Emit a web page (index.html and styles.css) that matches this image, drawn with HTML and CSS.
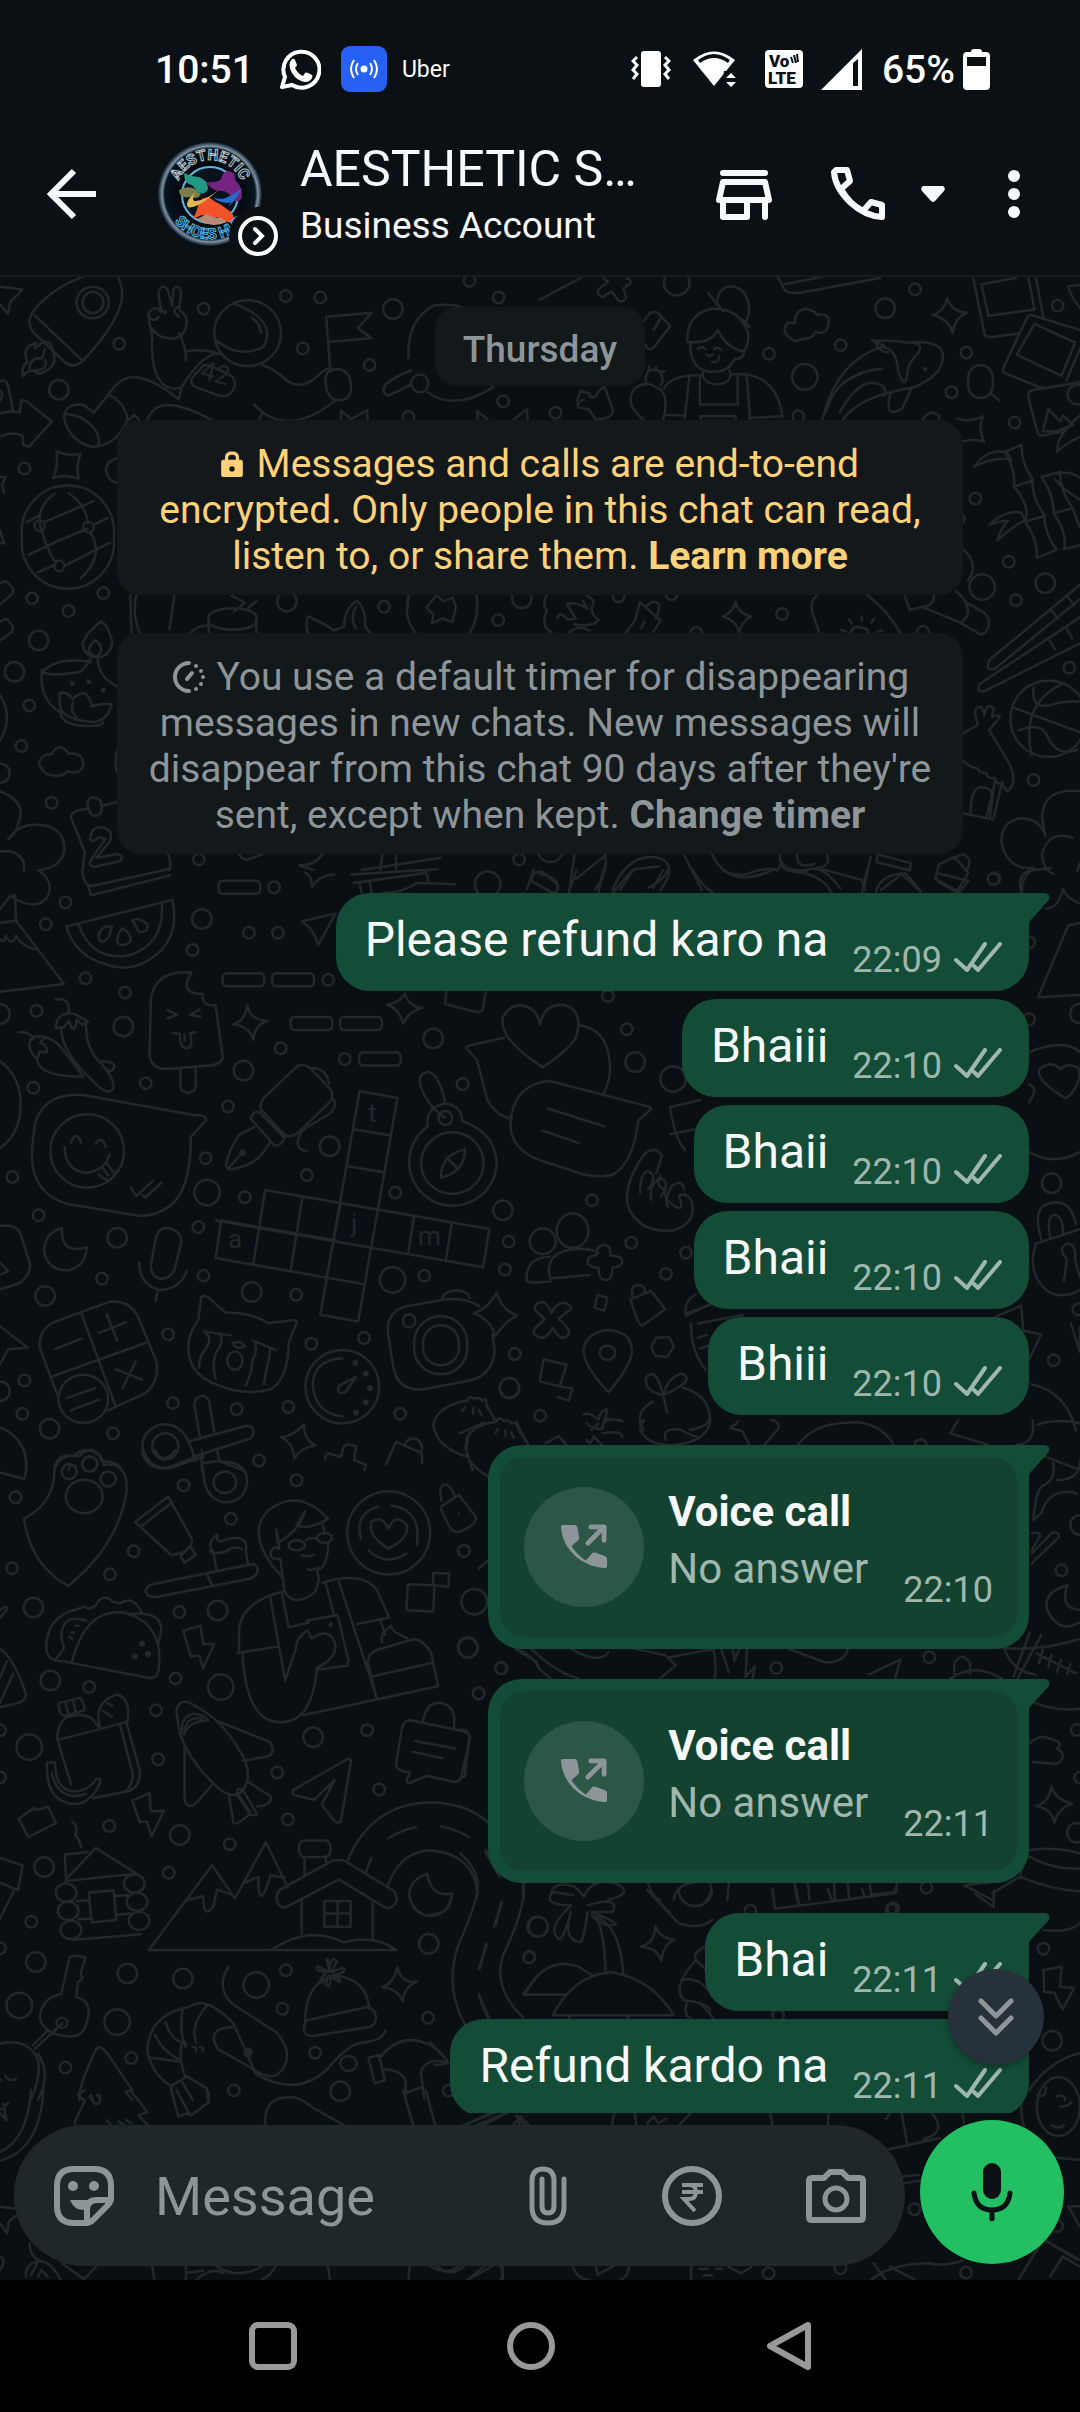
FILE: index.html
```html
<!DOCTYPE html>
<html lang="en">
<head>
  <meta charset="UTF-8">
  <meta name="viewport" content="width=device-width, initial-scale=1">
  <title>AESTHETIC S… - Chat</title>
  <link rel="stylesheet" href="styles.css">
</head>
<body>

  <!-- shared icons -->
  <svg class="sprite" aria-hidden="true">
    <symbol id="ticks" viewBox="0 0 48 30"><path d="M2 18l11 10L31 2M20 24l4 4L46 2" fill="none" stroke="currentColor" stroke-width="4" stroke-linecap="round" stroke-linejoin="round"/></symbol>
    <symbol id="tail" viewBox="0 0 22 30"><path d="M0 0h16c5 0 7 4 4 8L0 30z" fill="currentColor"/></symbol>
    <symbol id="call-out" viewBox="0 0 48 48"><path d="M2 1h12q2 0 3 2l2 11q0 2-1 3l-7 6q6 10 15 15l6-7q2-2 4-1l9 3q3 1 3 3v8q0 2-3 2C20 44 2 26 0 4 0 2 0 1 2 1z" fill="currentColor"/><path d="M28 20L43 5M31 3h14v14" fill="none" stroke="currentColor" stroke-width="5" stroke-linecap="round" stroke-linejoin="round"/></symbol>
  </svg>

  <header class="top">
    <div class="status">
      <span class="clock">10:51</span>
      <svg class="wa" viewBox="0 0 42 42"><path d="M3 39l3-10A18 18 0 1 1 13 37z" fill="none" stroke="#fff" stroke-width="4" stroke-linejoin="round"/><path d="M13 11q2-1 3 1l2 5q0 1-2 3 3 6 8 8l2-3q1-1 3 0l4 2q1 1 0 3-2 4-7 4-8-1-13-9-5-9 0-14z" fill="#fff"/></svg>
      <svg class="cast" viewBox="0 0 46 46"><rect width="46" height="46" rx="9" fill="#2660f5"/><circle cx="23" cy="23" r="3.5" fill="#fff"/><path d="M17 17q-4 6 0 12M29 17q4 6 0 12M13 14q-6 9 0 18M33 14q6 9 0 18" fill="none" stroke="#fff" stroke-width="2"/></svg>
      <span class="uber">Uber</span>
      <svg class="vibrate" viewBox="0 0 40 38"><rect x="10" y="1" width="20" height="36" rx="3" fill="#fff"/><path d="M6 7l-4 4 4 4-4 5 4 4-4 5M34 7l4 4-4 4 4 5-4 4 4 5" fill="none" stroke="#fff" stroke-width="3"/></svg>
      <svg class="wifi" viewBox="0 0 46 38"><path d="M2 10Q23-7 44 10L23 36z" fill="#fff"/><path d="M7 10Q23-2 39 10l-2 3Q23 3 9 13z" fill="#0b1014"/><path d="M33 21h12v16H31z" fill="#0b1014"/><path d="M35 28l5-5 5 5zM35 32h10l-5 5z" fill="#fff"/></svg>
      <svg class="volte" viewBox="0 0 38 38"><rect width="38" height="38" rx="4" fill="#fff"/><text x="4" y="17" font-size="17">Vo</text><text x="3" y="34" font-size="17">LTE</text><path d="M26 7l2 6M29 5l2 8M32 4l1 8" stroke="#0b1014" stroke-width="2"/></svg>
      <svg class="signal" viewBox="0 0 41 41"><path d="M0 41L41 0v41z" fill="#fff"/><path d="M32 14l5-4v27h-5z" fill="#0b1014"/></svg>
      <span class="charge">65%</span>
      <svg class="battery" viewBox="0 0 27 41"><path d="M8 3q0-3 3-3h5q3 0 3 3h4q4 0 4 4v30q0 4-4 4H4q-4 0-4-4V7q0-4 4-4z" fill="#fff"/><path d="M4 8h19v9H4z" fill="#0b1014"/></svg>
    </div>

    <div class="app-bar">
      <button class="back" aria-label="Back"><svg viewBox="0 0 72 72"><path d="M60 36H16M38 13L15 36l23 23" fill="none" stroke="#f7f8fa" stroke-width="6"/></svg></button>
      <div class="avatar">
        <svg viewBox="0 0 104 104">
          <defs>
            <path id="arc-top" d="M18 52a34 34 0 0 1 68 0"/>
            <path id="arc-bottom" d="M7 52a45 45 0 0 0 90 0"/>
            <radialGradient id="disc"><stop offset=".6" stop-color="#05090f"/><stop offset=".87" stop-color="#071522"/><stop offset=".92" stop-color="#7f93a3"/><stop offset="1" stop-color="#0c1c28"/></radialGradient>
          </defs>
          <circle cx="52" cy="52" r="52" fill="url(#disc)"/>
          <circle cx="52" cy="53" r="28" fill="#06131d" stroke="#60b5dd" stroke-width="2"/>
          <path d="M26 31q9 4 15 4 9 3 9 12-4 7-10 3l-6-7q-8-1-8-12z" fill="#239985"/>
          <path d="M21 48q9-5 16-1l6 5q-3 6-11 3-11 2-11-7z" fill="#7a8048"/>
          <path d="M48 40q11 1 15-3 2-8 8-8 7 1 6 9 8 7 7 17-3 7-9 3-5-10-12-9-9 0-15-9z" fill="#762382"/>
          <path d="M41 61q3-7 11-5 5 4 10 6l11 8q5 6 2 11-9-1-15-6-9 1-16-2l-9 4q4-8 6-16z" fill="#f45229"/>
          <path d="M39 77l10-5q8 5 13 3l7 5q-15 7-30-3z" fill="#b78b78"/>
          <path d="M62 47q-16 13-26 12-3-3 2-9-12 10-8 15 8 3 32-18z" fill="#dfb955"/>
          <path d="M84 46q-11 9-20 11l-9-1q11 7 18 4l-3 5q8-7 14-19z" fill="#236ecb"/>
          <text class="logo-top"><textPath href="#arc-top" startOffset="50%">AESTHETIC</textPath></text>
          <text class="logo-bottom"><textPath href="#arc-bottom" startOffset="50%">SHOES HUB</textPath></text>
        </svg>
        <svg class="badge" viewBox="0 0 58 58"><circle cx="29" cy="29" r="29" fill="#0b1014"/><circle cx="29" cy="29" r="18" fill="none" stroke="#fff" stroke-width="4"/><path d="M26 22l7 7-7 7" fill="none" stroke="#fff" stroke-width="4" stroke-linecap="round"/></svg>
      </div>
      <div class="who">
        <h1>AESTHETIC S…</h1>
        <p>Business Account</p>
      </div>
      <button aria-label="Catalogue"><svg class="ico" viewBox="0 0 60 60"><path d="M9 9h42M9 18h42l4 18H5zM9 37v16h24V37M51 37v16" fill="none" stroke="#f7f8fa" stroke-width="6" stroke-linecap="round" stroke-linejoin="round"/></svg></button>
      <button class="call" aria-label="Call"><svg class="ico" viewBox="0 0 60 60"><path d="M8 6h11l3 11-9 8q8 15 22 22l8-9 11 3v12Q37 52 23 39 7 24 6 8z" fill="none" stroke="#f7f8fa" stroke-width="6" stroke-linejoin="round"/></svg></button>
      <button class="caret" aria-label="Call options"><svg viewBox="0 0 24 16"><path d="M2 0h20q3 2 1 5L14 15q-2 2-4 0L1 5q-2-3 1-5z" fill="#f7f8fa"/></svg></button>
      <button class="more" aria-label="More options"><svg viewBox="0 0 24 48"><circle cx="12" cy="6" r="6"/><circle cx="12" cy="24" r="6"/><circle cx="12" cy="42" r="6"/></svg></button>
    </div>
  </header>

  <main class="chat">
    <!-- doodle wallpaper -->
    <svg class="wallpaper" viewBox="0 277 1080 2003" preserveAspectRatio="xMidYMin slice" aria-hidden="true">
      <defs>
        <path id="s1" d="M346 193h0M830 68h0M930 72h0M591 101h0M879 205h0M1073 248h0M1461 343h0M71 519h0M93 858h0M300 844h0M199 891h0M85 1138h0M62 1244h0M150 1392h0M1115 880h0M1447 915h0M577 1540h0M1448 72h0M1363 28h0M1186 384h0M1507 1540h0"/>
        <path id="m1" d="M171 313h0M1141 102h0M112 968h0M42 1050h0M833 866h0M0 1315h0M1515 858h0"/>
        <path id="s2" d="M665 212h0M873 190h0M1089 49h0M1238 209h0M1195 309h0M1503 90h0M1378 386h0M1264 578h0M1361 738h0M1382 835h0M1537 1006h0M1433 1290h0M1320 1538h0M703 870h0M45 361h0M750 370h0M1112 915h0M454 918h0M228 825h0M382 820h0"/>
        <path id="m2" d="M1002 97h0M1467 792h0M1560 315h0"/>
        <path id="l2" d="M397 32h0M769 270h0M1284 802h0M30 1465h0"/>
        <path id="s3" d="M190 85h0M133 142h0M248 283h0M363 320h0M106 368h0M97 569h0M423 557h0M559 209h0M723 164h0M807 164h0M796 45h0M953 287h0M815 466h0M1001 494h0M662 618h0M597 753h0M891 797h0M711 855h0M1148 843h0M1343 559h0M1477 971h0M1466 1044h0M1232 1060h0M860 1110h0M591 1060h0M576 933h0M296 1068h0M112 902h0M36 802h0M904 1238h0M1057 1223h0M1494 1265h0M488 1213h0M71 1334h0M65 1421h0M328 1472h0M502 1393h0M687 1409h0M837 1403h0M1162 1421h0M752 1543h0"/>
        <path id="m3" d="M586 128h0M358 409h0M707 524h0M957 722h0M1258 440h0M340 961h0M131 1113h0M731 1103h0M1460 889h0M1479 1355h0M144 1460h0M0 1362h0M0 376h0"/>
        <path id="l3" d="M601 843h0M1140 1071h0M1416 37h0"/>
        <path id="s4" d="M619 353h0M657 446h0M327 600h0M587 925h0M666 1044h0M776 1072h0M736 1131h0M432 1355h0M483 1528h0M1394 25h0M1515 1373h0M1466 418h0M1565 1230h0M1466 202h0"/>
        <path id="m4" d="M674 538h0M421 1450h0M1511 877h0M1568 402h0"/>
        <path id="l4" d="M750 585h0"/>
        <path id="s5" d="M45 114h0M35 285h0M388 244h0M319 300h0M533 85h0M670 166h0M861 73h0M521 391h0M510 551h0M259 572h0M453 628h0M459 746h0M805 778h0M836 891h0M667 951h0M490 1020h0M317 907h0M1066 676h0M1101 819h0M1456 526h0M1390 587h0M1346 243h0M91 1138h0M830 1255h0M820 1348h0M1243 1370h0M915 1454h0M679 1545h0M381 1467h0M190 1490h0M1537 1223h0M0 676h0M0 790h0M0 1202h0"/>
        <path id="m5" d="M97 380h0M146 556h0M632 387h0M909 693h0M1358 475h0M522 929h0M128 1006h0M104 1235h0M370 1263h0M531 1275h0M1245 1191h0M988 1547h0M1560 1150h0"/>
        <path id="l5" d="M641 572h0M85 717h0M744 1291h0M56 1340h0M340 1380h0M1378 366h0"/>
        <path id="s6" d="M10 393h0M47 820h0M104 745h0M800 744h0M1187 712h0M1521 451h0M1180 1403h0M1560 930h0M1165 75h0M1568 1073h0"/>
        <path id="m6" d="M1568 315h0M1560 1238h0M20 683h0"/>
        <path id="l6" d="M36 545h0"/>
        <path id="s7" d="M239 202h0M45 602h0M1480 176h0M1117 55h0M840 376h0M1293 1148h0M817 1150h0M1169 958h0M990 1135h0M1513 1008h0M773 62h0"/>
        <path id="m7" d="M261 110h0M1501 452h0"/>
      </defs>

      <g transform="translate(0 270) scale(.3444 .3827)">
        <use href="#s1" class="ring s"/><use href="#s1" class="hole s"/>
        <use href="#m1" class="ring m"/><use href="#m1" class="hole m"/>
        <path d="M0 44l65 7-35 32-7 31-23-24M246 16Q140 50 91 116 78 140 96 162L186 239Q212 260 240 238 365 120 354 50L344 18M100 118L241 238M300 85a30 28 0 1 1-60 0 30 28 0 1 1 60 0M316 85a47 41 0 1 1-94 0 47 41 0 1 1 94 0"/>
        <path d="M66 278Q60 250 80 240 60 200 105 190 90 220 120 190 150 180 155 215 165 245 140 260 110 280 98 262L76 268zM86 258Q85 235 110 230 125 240 130 205M105 262Q140 260 132 235"/>
        <path d="M0 375q30-10 58-2l4-33 14 2 74 54-65 65-18-3-2-26q-30-10-61 2M0 290q20-5 24 14l14 66M0 315q12 8 0 28"/>
        <path d="M186 384q5-38 55-32l32 20 38-42q40-56 84-50 60 8 124 58l8-30M186 384q10 60 80 78 70 0 105-70-10-50-58-66M190 376q40 0 74 28 30 30 22 54"/>
        <path d="M442 170q-10-30-12-56 20-26 38-4l-8-50q10-30 28-6l12 40 4-45q20-14 22 15l-6 40q26 14 22 40-10 40-56 34-30-2-44-26zM430 116q14 26 30 6M466 94q14 30 16 14M516 96q-20 12 4 26M442 170q-8 130 60 140l24-2M520 166q20 30 20 70M540 212q60-6 90 6"/>
        <path d="M816 165a97 86 0 1 1-194 0 97 86 0 1 1 194 0M628 184q70 50 138 16 40-70-86-112M732 126q24 14 26 38M636 218q-50 0-110 90M762 248q40 14 70 40 40 28 90-10 20-22 42-22"/>
        <path d="M580 260q10-16 28-10l60 24q20 14 12 34-16 28-46 20l-66-22q-16-8-12-22z"/>
        <path d="M958 250L947 122l132-10-40 40 40 26-126 10M950 268q40-22 64 10 14 40-8 58-40 16-56-20-10-30 0-48zM972 342q-140 100-234 10M762 374l-10 20M428 392q20-50 90-36 50 12 96 36M375 392l14-14 14 12"/>
        <path d="M1262 92Q1180 130 1186 230M1194 262q-110 40-70 66 20-4 70-30M1244 296a25 23 0 1 1-50 0 25 23 0 1 1 50 0M1242 320q80 50 190-14M1262 92q60-4 80 6M990 392v-24l30 22 46-24 2 26M1386 392v-22l30 20M1490 392l40-28 2 28"/>
        <path d="M164 474q36 14 70 6-14 30-6 66-40-14-74-2 16-30 10-70zM340 492q-34 8-32 34 6 26 32 30"/>
        <path d="M330 698a134 120 0 1 1-266 0 134 120 0 1 1 266 0M120 680Q100 620 160 584M76 660l40-20M130 658l142-54M272 666l40-18M84 744l80-34 90-34M110 790l50-20M190 772l130-60M264 688q40 60-30 118M200 584q50 30 56 78M122 684q20 60 40 80M130 668a15 14 0 1 1-30 0 15 14 0 1 1 30 0M272 672a15 14 0 1 1-30 0 15 14 0 1 1 30 0M187 773a15 14 0 1 1-30 0 15 14 0 1 1 30 0"/>
        <path d="M0 820q14-10 22-4l16 16q0 16-10 20l-28 22M0 920q14-10 22-6l16 18q0 12-10 18L0 968M0 540l16 2-10 18 6 22M0 680l12 34H0M378 850l4 98M396 850q-14 50 10 98M506 850l-14 90M670 850q26 10 40 20l-30 22M745 866q-20 10-28 24M606 912a70 24 0 1 1 138 0 70 24 0 1 1-138 0v36M744 912v36M554 948q20-20 50-18M893 948q-10-60 16-36 30 10 60 30l30-10q0-50 40-68 26 30 20 66l15 18M1034 880q-20 30 0 56M1184 880q0-20 2-30M1384 850q8 60-20 98M1188 850q-20 60 20 98M1268 850l20 16 26-10 10 24-10 40-30-10-30 14 4-24-20-18z"/>
        <path d="M294 918q-50 36-54 60 6 32 40 34 40 0 46-40-10-40-32-54zM276 968q-20 14-18 28 20 26 36 0 0-20-18-28M264 1014q-10 20-30 36-90 14-110 0 40-40 140-26M122 1045q-10 80 54 110 0 40 100 36 20 0 24-10M284 1014q0 50 56 74M180 1155q-10-20-6-50 20-4 38 16 10-14 34-16 20 16 20 36 20-10 58-6-10 40-50 46-60 0-94-26M212 1130q-10 20 10 38"/>
        <path d="M210 1080h0M258 1076h0M300 1098h0" stroke-width="5"/>
        <path d="M134 1316q-40-30 0-50 20 0 16-2 24-34 50 0 40-4 42 26-4 30-46 20-20 20-62 6zM340 1254q-10 30 0 60M0 1362q80 30 54 80-6 30-30 46 20-30 60-38 110-6 102 70-10 40-70 48M0 1520q50-10 70 30v20M0 1110q40 60 0 120"/>
        <path d="M340 1390l-44 10M256 1408q-50 4-50 22l40 90-6 48M262 1380q10-4 28 4 10 20 2 36-20 14-30-2-16-26 0-38M488 1526q10 20 4 42M694 1526q10 20 34 12l34-12M936 1526q-20 30-66 30l40 12M1110 1526l-6 42M1280 1536l-230 32M1150 1530v34"/>
        <path d="M262 1490q0-36 34-34 34 6 24 36l-40 44 60-10q20 4 10 18l-76 16q-20-4-10-18l42-56-20-4q-10 14-24 8z"/>
      </g>
      <text class="scribble" x="199" y="378" transform="rotate(15 199 378)">42</text>

      <g transform="translate(540 270) scale(.3444 .3954)">
        <use href="#s2" class="ring s"/><use href="#s2" class="hole s"/>
        <use href="#m2" class="ring m"/><use href="#m2" class="hole m"/>
        <use href="#l2" class="ring l"/><use href="#l2" class="hole l"/>
        <path d="M0 75L122 18M184 20l14 10-30 20q0 16 14 18l26-14 20 24q20 4 22-8l-8-24 20-12q4-14-12-12M690 18l22 34q14 8 40 6l236-38M710 36l108-18"/>
        <path d="M302 130q20-34 42-20l34 32-48 54q-14 10-24-6M350 122l-20 30M488 58l44 46M514 88q0-44 40-46 40 0 52 44 4 30-10 48M428 182q-4-70 70-84 80-4 106 60 4 30-12 48-50-8-76-54-20 36-88 30M436 186q0 60 48 70 60 8 80-30 30 0 28-24M590 126l18 18"/>
        <path d="M458 200q10-10 22 0M506 200q12-8 20 2M484 214l8 4 10-4M500 232q20 4 20-14M474 254q-10 30 40 36 50-6 36-36M464 266v74h110v-74M360 300q20-36 110-34M434 268l-14 108M600 268l10 108M556 264q130-10 148 106l-98 4M362 366l58 2M466 378v-8h102v8M300 378q-44-30-36-60 10-30 50-30 40 10 48 30 6 30-4 60M310 290q-10-20 6-34 20-10 34 4 12 20 0 32M316 254v-10M332 252l6-8M350 258l12-2"/>
        <path d="M108 330l10-24 26 6q-4 14 18 8 10-20 26-24l24 60q0 20-50 22l-20-26-30-4q-10-12 16-20"/>
        <path d="M732 176q-36-20-12-42 20 0 20 0 0-34 36-36 30 10 28 16 40-8 34 24-10 30-38 18-10 20-38 18-20 10-30 2z"/>
        <path d="M820 378q40-150 180-186-50-20-30-14 80 0 90 6 110-10 110 34 0 50-90 80-150 20-200 80M870 360q60-90 110-72 30 6 20 30M830 360q30-100 164-110-40 0-90 24M1000 196q36 6 40 60 20 50 26 10 0-30 30-54 20-20-10-28M1080 296q-20 40-30 56-30 14-36 0-6-20 6-44M970 180q20 30 40 28M1112 378q16-24 40-14 10 4 6 14"/>
        <circle cx="1118" cy="251" r="6" class="solid"/>
        <path d="M1182 72q14 34 58 36-36 12-42 52-10-36-58-46 34-10 42-42zM1212 376q34 10 74-6-16 30 4 64-30-8-66 0M568 840q8 30 46 36-26 10-36 40-8-30-48-40 30-10 38-36z"/>
        <path d="M1258 20l34 146 16 4 84-10M1440 18l22 106M1282 36l20 80 134-16-18-80M1282 36l100-16M1568 152l-140-38q-10 0-14 6l-70 130q0 10 8 12l110 38 64-10M1436 136l118 48-40 84-130-54zM1568 200l-40 80M1534 42l34-4M1534 42q10 30 34 54M1568 284l-140 20q-12 6-10 20l28 90q4 6 16 4l60-10M1460 408l16-56 34 30 8-14 30 24-50 16zM1568 368q-70 50-66 92 20-20 66-38M1314 282a36 34 0 1 1-70 0 36 34 0 1 1 70 0M1306 310l28 20"/>
        <path d="M1350 460l48-18q0 50 34 90l-56 16q6-44-26-88M1376 548q50 50 32 88l58-14q-40-50-36-90M1408 636q40 50 34 92l58-20q-34-40-36-86M1260 498q40-50 96-36l12 18q-50-10-108 18M1304 644q50-40 94-30l10 20q-30 10-80 50 4-20 30-50-20 0-54 10M1456 524l54-14q0 50 36 92l-54 14q0-50-36-92M1492 616q40 50 30 90l46-10M1546 602l22 50M1496 530q30 30 72 50M1500 516q40-10 68 10"/>
        <path d="M1568 796l-260 188q-12 14-6 24 6 4 20 0l246-176M1568 878l-280 162q-20 10-14 24 8 4 20 0l274-120M1484 860l20 22M1530 824l22 24M1480 938l16 22M1530 908l16 24"/>
        <path d="M1228 706q50 40 14 80M1228 620q10 10 0 20M1208 812q40 30 34 60l-18 20M1220 892l-110-40M1220 892l60 30q20-2 24-30 0-20-24-30l-40-20M1060 826l14 34 56-12q14-10 14-24M804 824q-20 10-14 40l20 52M950 822q60 40 96 96M900 918q10-20 30-14 20 0 24 14M934 876v12M970 882l-8 10M896 884l10 10M874 910l14 4M980 914l14-2"/>
        <path d="M20 822q-16 20 0 40-20 40 14 54M50 880q10-20 30 4l24-2-26-36q20-10 60 10l-14-20M136 824q30 10 14 30 0 20 20 30-10 20-70 12M84 916q30-20 60-4M290 840l-14 46-26 30M290 840l60 46-20 28M310 850q20-20 36-4 0 20-10 36M302 890l-8 16"/>
        <path d="M1588 1135a110 96 0 1 1-222 0 110 96 0 1 1 222 0M1378 1108l200 64M1434 1056q-10 50 40 46 50-14 94-10M1390 1164q60-20 80 10 30 60 90 40M1514 1048q-120 50-86 180"/>
        <path d="M1228 1172l44-22q-20-50 10-44 8 10 8 20 8-36 28-16l-6 20q20-6 24 0l-32 34 56 80q30 50-2 74-10-4-14-20-20 4-24-14-20 4-24-12-20 0-26-12-20 0-42-20M1228 1374l88 16 26-96M1250 1378q0-70 30-70 40 0 30 30l-14 46M1320 1292l-14 94"/>
        <path d="M1568 1318q-110-10-110 70l10 44q-20-50-80-44-50 10-48 60 16 70 94 64-40 30-34 58M1546 1436q-70-20-88 40 0 40 34 52M1568 1500l-8 20M1158 1504l44-20 42 40-32 46-64-30 10-36M1204 1490q20-20 36-6 16 14-4 36M980 1478l96 22-2 18-96-20zM960 1484l-20 84M990 1568l60-40 50 40"/>
        <path d="M420 1482l50 86M500 1478q30 60 100 50 60-20 90-10l12-20q20 30 90 16 40 0 80 50M696 1478q0 30 20 40 60 10 60 0M746 1478q0 40 50 24M834 1480q10 30-30 32l130 30 10 26M100 1480q-10 50-14 90M190 1480l-86 60M190 1480q6 50-30 86M210 1568q50-100 140-80 50 20 0 80M346 1508l-74 8-40 52M0 1528q60 10 50 36"/>
      </g>

      <g transform="translate(0 870) scale(.3444 .3827)">
        <use href="#s3" class="ring s"/><use href="#s3" class="hole s"/>
        <use href="#m3" class="ring m"/><use href="#m3" class="hole m"/>
        <use href="#l3" class="ring l"/><use href="#l3" class="hole l"/>
        <path d="M110 0q50 30 28 70-30 40-106 0l12-4 2 66 140 166L0 318M32 66l-32 36M0 138l46-6M0 182q16 10 16-10 20 30 30 0 20 30 62 36M240 0q0 40 28 42l220-44M256 42l8 24 230-52M192 148l308-70q20 80-30 130-80 70-170 36-80-20-108-96zM228 142q40 100 150 80 100-30 92-134M325 148q-30-6-40 24 10 30 32 0zM356 152q-20 20-14 40 20 10 38-6 0-20-24-34M384 132q20-10 44 10 6 20-24 20z"/>
        <path d="M646 28h98q12 0 12 17t-12 17h-98q-12 0-12-17t12-17M658 270h98q12 0 12 17t-12 17h-98q-12 0-12-17t12-17M802 270h98q12 0 12 17t-12 17h-98q-12 0-12-17t12-17M855 384h98q12 0 12 17t-12 17h-98q-12 0-12-17t12-17M999 384h98q12 0 12 17t-12 17h-98q-12 0-12-17t12-17M1054 477h98q12 0 12 17t-12 17h-98q-12 0-12-17t12-17"/>
        <path d="M876 134l98-20-50 82q-10-40-48-62M886 6q20 10 20 38 20-30 64-32M1020 12l250-14M1026 34l210-26M1044 32l6 28M1074 28l4 30M1236 0l8 28M1110 60q60 0 100-26 50 0 112 4M718 354q10 40 58 40-38 12-40 50-14-38-60-40 36-10 42-50M1124 352q40-6 52-30 10 36 50 38-40 10-56 42-10-40-46-50M1296 318l-4 32 96 22q10 0 14-8l8-46M1530 50l20-50"/>
        <path d="M556 268q-40 56 34 56-10 30 36 30l20 130q4 20-30 26l-130 10q-50 0-52-40l4-140q10-80 118-72M524 516v50q0 14 22 16 20-2 22-16v-52M486 366l28 12-28 10M580 364l-28 14 30 6M500 426l22 2q0 40 20 38 20-2 10-40l16-2M536 430v16"/>
        <path d="M162 338q40-6 38 32M162 414q0-44 54-38l40 20-18 8-16-14q0 30-14 24l-8-20-14 16zM178 414q0 60 90 136 40 40 60 24 10-20-30-64-50-40-48-106M54 424q30-4 44 18M108 496q-40-40-10-60 50-10 94 44l50 60q-130 0-134-44zM108 496l6-20 22-2q0-20-20-22l12-10M286 500q46 0 46 14-10 20-22 6"/>
        <path d="M102 660q30-80 140-72l320 52q40 0 36 14l-44 44q0 160-80 190-40 20-80 14l-200-30Q80 840 94 720zM360 734a107 96 0 1 1-214 0 107 96 0 1 1 214 0M206 712q16-34 30 0M278 716q16-26 30 8M188 724q0 60 60 68 60-8 70-50M286 794q20 20 36 16l18-26M298 778l16 20M312 768l16 20M380 830l16 22 48-40M414 850l8 6 48-40M0 500q60 40 60 110 0 80-60 116"/>
        <path d="M864 512q20-8 40 8l58 56q8 20-4 30l-92 80q-20 16-40 6l-62-60q-16-10 2-36zM906 518q40-2 50 40M728 650q6-20 24-18l74 68q-10 22-28 20l-70-70M738 672l-44 20q-30 40-38 80 6 14 20 10 50-10 80-34l30-38M664 778l40-40M710 738a6 6 0 1 0 0 1M970 600q10 30-30 46l-56 30q-20 20-20 40 10 20 26 18"/>
        <path d="M1044 578l110 18-114 584-110-18zM1029 678l107 16M1009 774l106 16M770 836l651 102-18 100-775-122M642 916l-16 98 428 68M770 836l-34 190M878 856l-34 190M989 870l-42 200M1202 906l-16 92M1311 926l-16 92M642 916l335 52"/>
        <path d="M1442 766a127 114 0 1 1-200-96q-8-50 50-60 50 6 50 46 96 30 100 110M1404 766a90 80 0 1 1-181 0 90 80 0 1 1 181 0M1350 730q0 60-70 74 0-60 70-74M1296 752l34 28M1292 604q-20-76-50-76-40 6-10 60 20 34 60 60M1313 648a20 18 0 1 1-40 0 20 18 0 1 1 40 0"/>
        <path d="M180 936q-50 10-52 60 10 50 70 50 50-10 54-60-76 20-72-50M488 936q40 6 38 40l-20 70q-14 24-44 22-26-10-24-36l14-70q10-30 36-26M404 1024q0 60 60 74 60-4 78-50M458 1100l-6 26M0 930q50-6 60 22l26 74q6 30-30 54l-56 16M0 1026l24 22-24 10M0 1192l80 56-56 4-24 40"/>
        <path d="M320 1128q60-4 84 46l50 110q10 50-30 82l-110 46M320 1128l-160 52q-50 20-44 70l54 130M236 1158l100 244M150 1324l272-88M286 1210l80-28M310 1160l30 70M336 1304l76 28M394 1284l-38 70M160 1252l78-28M314 1382a72 63 0 1 1-144 0 72 63 0 1 1 144 0M194 1380l82-26M206 1412l82-28"/>
        <path d="M576 1176l8-60q10-6 20 0l50 40q80 0 124 28l76-8q10 0 6 10l-22 50q0 90-50 120-80 20-160-12-90-30-80-110 4-30 28-58zM592 1206l80 10M734 1230l66 24M598 1210q20 14 0 40-20 20-20 50M640 1214q10 20-8 40-20 30-6 76M740 1238q10 16-6 40-4 40-20 68M784 1254q0 20-8 40-4 20-10 50M704 1282a22 24 0 1 1-44 0 22 24 0 1 1 44 0M676 1236q10 20 34 8-10-16-34-8"/>
        <path d="M1101 1350a107 96 0 1 1-214 0 107 96 0 1 1 214 0M994 1276q-86 4-86 74 10 70 86 78M1034 1324l-30 40q-30 10-20-16z"/>
        <path d="M1032 1288h0M1062 1316h0M1074 1354h0M1062 1391h0M1034 1418h0" stroke-width="6"/>
        <path d="M1392 1140q-40-24-100-18l-100 16q-70 10-66 70l16 90q10 60 80 60l120-20q90-10 94-84l-6-40M1356 1242a77 68 0 1 1-153 0 77 68 0 1 1 153 0M1332 1242a52 46 0 1 1-103 0 52 46 0 1 1 103 0M1206 1178a18 17 0 1 1-36 0 18 17 0 1 1 36 0M1284 1118q10-20 46-20 30 4 34 20M1442 1104q14 46 60 60-30 10-64 54-10-40-62-60 40-10 66-54"/>
        <path d="M552 1492l164-40q20 0 20 16 0 14-12 18l-164 48M580 1478l-16-80q4-24 24-24 20 4 20 20l14 74M566 1534l-20-44q-30-50-86-40-50 20-46 60 20 60 80 50zM518 1506a38 34 0 1 1-76 0 38 34 0 1 1 76 0M586 1538v30M630 1516l8 30 68 22M882 1448q0 40 34 56-40 4-62 34 0-40-38-56 40-4 66-34"/>
        <path d="M1258 1450q10-50 100-64 0-14 20-4 14-6 22 4 14-10 12 12l28 42M1258 1450q10 60 100 84M1440 1442q10-16 24-2 14-6 20 6 20-4 20 14l30 40M1440 1442q-90 10-88 70l20 56M1350 1404l-8 10M1374 1406v14M1390 1410l8 14M1446 1460l-8 12M1468 1464v14M1484 1470l8 14M944 1540q0-20 16-14l30 8 8-28q10-10 36 0l-6 36 34 12-4 14M1120 1554l30-60 74 30 2 26M1176 1500q10-20 36-12 20 14 10 34M158 1562q10-40 60-30 10-20 50-16 26 10 26 28 50 0 60 26M200 1568q0-20 20-8M282 1552a20 18 0 1 1-44 0 20 18 0 1 1 44 0M0 1456q80 30 76 112"/>
      </g>
      <g class="scribble">
        <text x="368" y="1122">t</text><text x="351" y="1232">j</text><text x="418" y="1245">m</text><text x="228" y="1248">a</text>
      </g>

      <g transform="translate(300 870) scale(.4974 .3571)">
        <use href="#s4" class="ring s"/><use href="#s4" class="hole s"/>
        <use href="#m4" class="ring m"/><use href="#m4" class="hole m"/>
        <use href="#l4" class="ring l"/><use href="#l4" class="hole l"/>
        <path d="M488 552q-90-80-80-140 20-50 56-24 16 16 18 44 10-60 50-54 40 16 22 94-20 40-66 80zM410 470l-70 22q-8 4-4 10l20 30 20 110q20 50 50 54M560 434q50 10 60 80 10 60-10 114"/>
        <path d="M500 590l200 72q8 4 4 10l-24 30q-10 120-50 150-20 12-60 0l-90-40q-70-40-54-130 10-80 74-92zM498 668l114 50M488 730l72 34"/>
        <path d="M728 800q-14-30-36-4-40 80-34 140 20 80 90 74 50-20 40-80-10-30-26-18 10 40-2 34-30-20-26-50-20-10-10-40M684 904q0-60 16-60 20 10 0 50M706 924q-4-50 20-60 20 10 0 50M740 944q-10-20 8-60 20-20 24 10M728 800l-12 50M744 664l60-20M744 664q10 90 30 120M744 740l50-14"/>
        <path d="M580 1010a32 48 0 1 1-64 0 32 48 0 1 1 64 0M514 1040a26 36 0 1 1-52 0 26 36 0 1 1 52 0M502 1140q-10-70 48-78 40-4 50 10M502 1144l80-10M502 1084q-50 0-46 68l14 4 34-4M596 1078q0-30 16-28 14 0 12 30 24 0 24 16 0 14-20 18 0 36-14 34-14 0-14-34-20 0-22-18 0-16 18-18"/>
        <path d="M486 1210q8-2 20 30 10-30 26-28 20 10 10 20l-22 24 20 30q4 20-12 24-8 0-20-28-12 30-24 28-20-10-12-26l20-26-20-26q-2-18 14-22M598 1190l20 8-6 36-20-8zM670 1200l36-22 28 52-46 46q-8 0-24-76M670 1200q-8-40 10-38 14 0 14 24M620 1462q-60-90-48-130 10-40 48-44 40 4 46 44 10 40-46 130M634 1352a16 20 0 1 1-32 0 16 20 0 1 1 32 0M716 1310l26-2 10 26-14 30-24-4-8-24zM490 1370l46 16-14 60-40-14zM522 1446l26 6-8 34-22-10M730 1470q-40-10-34-50 20-30 34 50 10-50 38-60 30 20-38 60M730 1470l8 50M690 1568q-20-50 20-80M770 1450q50 20 54 80 0 30-40 38M570 1524q14-6 30 16 4-30 18-30l-6 34q20-10 36 0M600 1550l-14 18"/>
        <path d="M780 1240l60-30M776 1248q-6-40 20-60M786 1270q0 80 30 130M776 1248l60-40M800 1270l90-24M800 1310l18-8M804 1340l18-8M470 10l16-6 32 36q4 20-10 24l-44-34zM540 62l16-62M600 62l10-62M630 62q30-50 40-62M700 50q30-20 40-50M730 0l-20 50M790 0q20 50 40 62M850 0q40 40 100 0M980 0q70 10 88 62M1140 0l-10 62M1158 60q10-50 60-50l30 50M1284 10l60 20-20 34-40-30M1450 62q-10-50 20-62l40-4"/>
        <path d="M1500 108q24 0 34-54 10 30 34 40M1568 350l-84 6 60-200 24-8M1466 510q70-40 102 0M1466 790q50 40 102 0M1540 640q-60-50-54-80 20-30 44-2 10-20 36-4 6 50-26 86M1466 650q20-40 0-50M1490 1032q-20-90 20-100 40-10 50 60M1508 1026q-8-60 10-60 16 4 16 50M1480 1046l88-40M1480 1046q-20 80 20 130 30 30 68 0M1536 1150l6-60q-20-30 0-44 20 0 16 44l10 50M1400 1250l50-30 4 70 36 10-24 70M1470 1440q70 20 90 128M1550 1270l18 80v-70"/>
      </g>

      <g transform="translate(0 1450) scale(.3444 .4145)">
        <use href="#s5" class="ring s"/><use href="#s5" class="hole s"/>
        <use href="#m5" class="ring m"/><use href="#m5" class="hole m"/>
        <use href="#l5" class="ring l"/><use href="#l5" class="hole l"/>
        <path d="M70 166q90-40 88-120 20-40 72-30 20-24 50-8 20 10 20 28 70-10 68 60-20 130-170 232-110-50-128-162M223 52a22 18 0 1 1-44 0 22 18 0 1 1 44 0M283 34a22 18 0 1 1-44 0 22 18 0 1 1 44 0M336 70a22 18 0 1 1-44 0 22 18 0 1 1 44 0M298 112a53 40 0 1 1-107 0 53 40 0 1 1 107 0M70 0q14 40 0 70L0 54"/>
        <path d="M412 0q10 50 80 44l100-28M450 0q20 40 60 0M560 10l8 16M586 0l4 20M630 0l8 28q80 0 80 50-10 50-70 48-50-10-56-60l-8-52M686 78a33 26 0 1 1-66 0 33 26 0 1 1 66 0M586 32l52-6"/>
        <path d="M392 174l96-62 70 104q0 30-60 38zM408 186l92-60M524 256l28-24 16 20-32 20zM422 340q4-12 20-16l284-48q20-2 22 10 4 14-20 24l-270 44q-30 4-36-14M602 300l14 28M630 292l-12-48q-20-20 14-40-8 26 30 10 60-10 52 30l6 30M610 244q14 10 24 4 20 0 30-8 20-10 40 0"/>
        <path d="M820 308q-110-100-44-160 90-60 176 18-60 30-90 14l24-32q-20 50-80 76l-4-32q8 30 8 46-20-10-24 14 0 14 28 10l12 80q30 40 90 0l10-30-6-24q30 0 34-66M936 180l8 22M886 230a24 12 0 1 1-48 0 24 12 0 1 1 48 0M964 212a22 12 0 1 1-44 0 22 12 0 1 1 44 0M888 218q20-10 34-2M876 254q20 6 34-2M892 288q16 4 30-4"/>
        <path d="M694 490v-50q0-70 124-98l20 86 60-12M690 490l118-16M704 490q10 160 100 166 100 10 116-126l90-10M784 352l44 204 30-74q0-30 36-46M898 442l6 12q60-30 70 20 0 30-56 52M890 412l90-14 32 110-4 10M946 322l24 76M984 318l110 280M936 320q120-30 160 20l34 64-92 16M1104 408l14 38M880 640l392-70-20-80q-20-30-50-34l-106 26q-30 10-28 30l26 90M1084 546l168-32M1110 464q-10-20 26-40 0 14 46 30"/>
        <circle cx="960" cy="421" r="6" class="solid"/>
        <path d="M1249 200a120 100 0 1 1-241 0 120 100 0 1 1 241 0M1128 238q-60-30-50-64 30-20 50 16 20-40 54-8 6 30-54 56M1048 214q-20-60 50-78M1136 134q90 10 74 96M1070 242q50 40 110 8M1282 136l50-28 50 54q0 20-50 36-20 0-28-14l-24-42M1282 122q-10-30 6-38 16-4 32 24M1332 154h0"/>
        <path d="M1184 324l78 2-4 64-78-4zM1258 296l46 2-2 32-44-4zM1390 286l28-20M532 436l50-12 8 44 32 0-32 58-12-30-24 2zM1496 480l60 30 12 20"/>
        <path d="M134 480q0-80 90-96l20-6q20 10 34-4 20-30 50-8l20 4q40-20 62 20M134 480q4 30 50 30l250 40q20 2 26-16 20-110-90-140-120-20-162 120M250 412q-70-20-72 40l8 26-26 30M370 396q100-10 98 40l-8 30M206 440h10M220 424h8M200 450l10 6"/>
        <path d="M412 467h0M392 498h0M430 492h0" stroke-width="6"/>
        <path d="M0 480q40 20 76 110-4 20-40 24L0 620M20 510l-20 40M38 540l-38 70M0 386q20-12 22-4l-22 24M172 610l60-12q10 4 14 30l-60 14q-20-10-14-32M190 608l8 30M212 602l8 32M196 642q-30 20-30 54l40 110M166 700l204-44M190 646q70-20 94 20M290 668q-20-60 50-78 40 10 30 64M300 630l26 14M312 610l14 8M348 662l38 120q-4 30-20 40M366 654l40 120q0 40-30 48l-106 18M136 756q0-4 24-2 0 70 60 70 40-4 60-30 20-6 4 20-40 60-110 30-40-20-38-88M150 780q20 70 100 50"/>
        <path d="M512 630q10-40 60-10 70 30 120 100 50 60 10 104-30 20-70-10-80-60-110-130zM530 684q-10-40 34-48 30 4 40 16-60 4-70 34M536 672q10-30 50-24M632 654l150 50q20 20 0 34l-76 12M536 708v130q0 24 24 20 10-4 54-50M664 830l14 70q10 6 50-24l-40-50M688 820q10-6 20 4l38 54q-12 6-20 0l-36-44M720 800l66 36q6 20-40 24"/>
        <path d="M852 820l160-76q10 0 6 12l-28 140q-10 6-20-2l-36-38 38-60-60 48-50-10q-20-4-10-14M54 890l44-26 12 4 30-8 22 40-80 34zM384 846l50-18 4 44 38-2-36 62-14-36-20 2zM210 896q20 16 8 32 14 14 18 30"/>
        <path d="M1168 668q6-16 24-16l150 26q24 4 22 20l-24 90q-4 14-24 12l-78-14-50 18q-10 0-6-10l8-16q-40-4-40-20l18-90M1228 656q10-50 52-46 46 8 38 60M1206 702l116 18M1198 728l86 16"/>
        <path d="M192 1036l86-76 118 62-206 18M192 1036l-4-60 66-6M222 1068a30 22 0 1 1-60 0 30 22 0 1 1 60 0M228 1112a30 22 0 1 1-60 0 30 22 0 1 1 60 0M236 1158a30 22 0 1 1-60 0 30 22 0 1 1 60 0M420 1046a30 22 0 1 1-60 0 30 22 0 1 1 60 0M428 1090a30 22 0 1 1-60 0 30 22 0 1 1 60 0M434 1136a30 22 0 1 1-60 0 30 22 0 1 1 60 0M258 1068l72-6 8 72-72 6zM222 1088l38-2M334 1076l38-2M228 1132l38-2M338 1122l38-4M210 1182l200-14M0 984l66 18-14 60-52-18M0 1130l40-66"/>
        <path d="M1150 1206H432l184-204 66 80 90-136 64 110M544 1086l46-10q0 60 30 24l10-40 40 12M710 1044l40-14q0 80 26 20l10-24 40 6M806 1094q-8-20 6-32l150-70q20-6 40 0l142 72q14 20 4 30-10 14-30 10l-134-68-156 68q-14 0-22-10M884 1024v-42M946 996v-14M880 942h66q14 4 14 20t-14 20h-66q-12-4-12-20t12-20M876 1086v84M1082 1092v88M942 1088h76v62h-76zM980 1088v62M942 1118h76M790 1204q60-30 110-34 60 0 98 18 90-20 152 18"/>
        <path d="M1010 990q70-140 250-140 100 6 160 50M1124 1054q40-90 130-88 120 10 132 100-8 40-56 130-40 100 20 190M1520 1040q10 60-60 180-30 80 60 150M1128 936q40-20 80-26M1282 908q50 10 80 26M1078 984l-16 36M1458 1090l-24 60M1414 1192l-24 60M1390 1314q10 30 30 60M1410 970l40 60M1520 1312l48-50"/>
        <path d="M1240 1022q-60 20-50 60 20 50 80 40 40-14 42-52-60 10-72-48M1154 1248q10 40 58 34-40 14-42 48-14-30-60-34 34-10 44-48M202 1224q10-8 46 0l-14 40 6 10-14 10-4 36q50 10 30 60-10 40-60 34-60-4-76-40 0-50 62-62zM196 1382a16 12 0 1 1-32 0 16 12 0 1 1 32 0M180 1384l-78 60M136 1402l-40 34M0 1432q80-14 110 38 10 40-20 98M110 1456q40 50 0 112M0 1520h4M16 1510q10 14 30 8"/>
        <path d="M886 1380q0-100 90-112 90 10 96 80M890 1376l176-32q20 0 26 24 0 20-20 24l-164 22q-40 0-18-38M960 1260q-20-40-6-30l2 24q10-40 22-20l-16 26q50-20 34 0l-30 8q30 10 20 16l-26-14q0 34-14 20l8-22q-20 26-24 10l20-20q-40 0-28-12zM1070 1466l30-6 18 60-30 8zM1100 1470q60-70 150-34 40 20 52 44-60-20-80 20l10 66M1108 1494q60 0 70 30v44M1180 1550l50-14"/>
        <path d="M664 1246q-40 50 10 90l130 70q60 60 0 102-30 10-80-20l-90-42q-40-50 40-54M740 1500l-62-116q-80-70-130-40-120 20-120 110 20 60 70 80l40-20q-20-50-10-80M480 1380q20 50 60 50M530 1350q-10 60 10 90M600 1340q-50 50-30 90M450 1410q20 40 70 60M440 1466l86 10M496 1534l10 34M540 1510l60 30 4 28M530 1526l30 42M560 1440q14 0 8 10M580 1440q14 0 8 10M740 1504q120 60 210-10 60-60 100-64 60-4 70-30M988 1480a24 18 0 1 1 48 0 24 18 0 1 1-48 0M230 1568q-4-30 50-124 10-10 30 10l74 90-20 4 20 20M260 1560l10 8M282 1556l10 8"/>
        <circle cx="720" cy="1453" r="13" class="solid"/>
      </g>

      <g transform="translate(460 1420) scale(.3954 .3333)">
        <use href="#s6" class="ring s"/><use href="#s6" class="hole s"/>
        <use href="#m6" class="ring m"/><use href="#m6" class="hole m"/>
        <use href="#l6" class="ring l"/><use href="#l6" class="hole l"/>
        <path d="M0 40L60 8M172 74q-20-40-30-70M20 60q-20 60 52 110M216 70l34-22 20 28M320 10q20 20 40 16 0-20 14-30M320 60q10 20 18-10l20 24M360 40q50-10 50 10M456 30q0-20 10-30M456 30q20 50 90 44 80-10 88-74M520 60q-10-40 40-30 30 20 40 20M684 20q10 0 20-16M684 24l30 10 18 40M770 74l36-50q0-24-20-24M856 72q40-60 120-64 80-10 120 64M1240 40l20-40M1240 40l96 34M1448 0q10 70-40 74M1460 14q50-20 108-4M1480 110l88 40M1510 180q60 0 58-60M1500 130q10 50-30 70-14 20-20 100l20-20q20-80 90-60M1446 390l20-40q6-16-20-10M1446 430l70-80q-6-20-20-10l-50 60"/>
        <path d="M140 686l20 10q30 20 40 50l30 30M180 686q60 70 120 90M280 686q70 50 96 10M440 686l80 20 26 30-40 40M530 712l116-26M640 686q10 40 4 90M660 686l20 70M690 686l4 36 12-34M726 686l-4 86 24-34-6 38M830 686l90 40q50 6 62-40M1034 764l80-46-14 60M1240 776q60-50 130 0M1250 770v-40q20-40 40 0v30M1376 684q90 10 190-26M1376 684q20 70 80 80M1440 640l-40 130M1470 646l-60 130M1568 866q-60 10-120-20M1458 700l100 60M1474 690l-10 40M1496 704l-8 36M1520 720l-10 36M1544 732l-8 30"/>
        <path d="M1536 496q-60 20-52 70 30 80 84 40M1536 496q-20 70 32 74M1440 970q30-30 50-14 40 10 20 30 30 20 0 46l-60-6M1496 1100q10 40 52 50-40 20-44 58-10-44-48-50 34-10 40-58M1440 1290q60-10 128 10M1440 1310q60 40 128 36M1430 1310l-14 60q80 40 152 44M1276 1396l70-10M1276 1396l70 44M1416 1370l-70 50M0 1160q50 20 72 50M0 930q30-6 22 40l-10 100-12 4M66 1290q20 30 34 80M0 1300q60 60 40 140M160 1390v50M230 1420q10-40 60-20l24 30q20-60 80-40 50 30-20 50M476 1390q10 40 30 50M540 1440q10-50 50-50M632 1390q10 30-10 50M680 1390l-4 50M846 1388l6 52M880 1388l4 52M946 1388l2 50M980 1388l4 44M1036 1388l4 36 64-8v-28"/>
      </g>

      <g transform="translate(430 1890) scale(.4145 .3333)">
        <use href="#s7" class="ring s"/><use href="#s7" class="hole s"/>
        <use href="#m7" class="ring m"/><use href="#m7" class="hole m"/>
        <path d="M172 36l-14 70M136 162l-16 74M118 314l24 70M0 74q50 0 52-60M0 456l40 54q6 16-30 14M380 66q-10 100-20 90-40-10-20-90-20 90-30 80-30-30 30-100-70 0-44-40l50 10M380 46q80-30 60 20l-50 0q80 40 50 40-30 0-50-30M400 80q20 40 24 170M400 80q60 30 66 170M228 314q50-120 130-84l36 28M228 314h100M296 376q50-120 140-130 100 20 152 130zM336 376v10M480 376l-6 12M544 108q10 36 46 42-26 10-32 62-10-40-50-42 34-10 36-62M524 0l76 100q50 20 80-10M680 0a40 48 0 1 1-80 0M540 20l40 50"/>
        <path d="M662 170q-30 20-20 40-60 80-30 120 60 10 64 30M642 210l24 30M612 270q30-10 60 30M620 336q-10 40 10 50M650 340q20 20 34 46M832 56l290-46v-14M832 56l-6-60M890 44l-6-44M970 32l-10-34M1048 20l-6-24M1100 66q0-24 14-24 16 0 10 26M1360 52l-44-40M1360 52v-50M1480 120q60 10 88-20M1480 240l44-10-4 60 34 4-28 64-20-50-24-2z"/>
        <path d="M1446 600q50-90 122-110M1568 650a52 88 0 1 1-104 0 52 88 0 1 1 104 0M1466 616q20 10 20-24M1512 620q20-10 20 10M1520 650q20 0 28-14M1500 706q16 14 30 0M1426 640q0 120 60 160l82 10M80 706l80-40M110 706l80-40M200 706l20-26M210 680l20 26M440 706q0-24 6-38M494 668l4 38M524 700l16-20 10 20 20-14M600 706l30-38M820 668l6 38M960 706q0-30 4-38M1138 668l14 100M1210 668q40 60-20 80M1100 780l130-36M1110 668l-10 20M1284 668l4 30M1130 860l50-6M1140 880l44-8M1540 950l28 60M1540 950l28-2M1480 1050l88 60M1420 1168l60-120 80 60M1496 1160l30-60 42 30"/>
        <path d="M344 1128q10 40 40 42M400 1128l4 26 40-26M480 1128q0 30-20 42M630 1128v42M650 1136h20M690 1136h14M660 1156l20 0M720 1130l30 20q20-14 26-20M1064 1170q50-50 140-50 40 10 80-8M1070 1120l30 50M1110 1130l60 40M90 1170l40-40M170 1128q10 30 0 42M0 1128q40 30 70 0"/>
      </g>

      <g transform="translate(0 2090) scale(.3444 .3333)">
        <path d="M90 0q-10 150-90 186M126 0q-10 180-126 212M0 60l24-20M0 70l20 20M10 40l8 50M246 0l-20 16 20 16-30 66 4 10M378 0l50 66-26 10 32 34M264 16q10 40 26 20v-20M310 90l14 18M344 94l16 10M366 90l16 10M496 0l22 80M512 0l40 76M518 80l24-10 14 6 50-40v-30M770 106q-6-90 80-84 20 0 60 32l90 52M1170 0l30 106M1236 0l28 106M1350 106l80-40M1400 106l70-36M1500 76l10 30M1510 80l26 24M0 350l44 6M0 400l20 30 6-36 20-16M86 460q0 40 30 52M76 560q-6-40 40-46 30 0 60 54M90 556l20-40M110 560l10-20 20 20M180 520l64 48 36-40M442 528l6 40M540 528v40M540 548l50-6M570 570q40-40 80-20M630 530q60 40 130 0M800 528q-14 30-40 40M952 528l6 40M1190 528l-4 40M1268 528q40 36 80 0M1460 528v40M1360 568l70-40M0 500q20 10 0 40"/>
      </g>
    </svg>

    <section class="messages">
      <p class="day">Thursday</p>
      <p class="notice encrypted"><svg class="lock" viewBox="0 0 20 24"><path d="M5 10V6q0-4 5-4t5 4v4" fill="none" stroke="currentColor" stroke-width="3"/><path fill-rule="evenodd" d="M2 8h16q2 0 2 2v12q0 2-2 2H2q-2 0-2-2V10q0-2 2-2zm8 6a2 2 0 1 0 0 5 2 2 0 1 0 0-5z" fill="currentColor"/></svg> Messages and calls are end-to-end encrypted. Only people in this chat can read, listen to, or share them. <a href="#">Learn more</a></p>
      <p class="notice"><svg class="timer" viewBox="0 0 34 34"><path d="M18 3a14 14 0 1 0 0 28M16 19l5-6" fill="none" stroke="currentColor" stroke-width="4" stroke-linecap="round"/><g fill="currentColor"><circle cx="25" cy="6" r="2"/><circle cx="30" cy="11" r="2"/><circle cx="32" cy="17" r="2"/><circle cx="30" cy="24" r="2"/><circle cx="25" cy="29" r="2"/></g></svg> You use a default timer for disappearing messages in new chats. New messages will disappear from this chat 90 days after they're sent, except when kept. <a href="#">Change timer</a></p>

      <div class="bubble first"><svg class="tail"><use href="#tail"/></svg><span class="text">Please refund karo na</span><time>22:09</time><svg class="ticks"><use href="#ticks"/></svg></div>
      <div class="bubble"><span class="text">Bhaiii</span><time>22:10</time><svg class="ticks"><use href="#ticks"/></svg></div>
      <div class="bubble"><span class="text">Bhaii</span><time>22:10</time><svg class="ticks"><use href="#ticks"/></svg></div>
      <div class="bubble"><span class="text">Bhaii</span><time>22:10</time><svg class="ticks"><use href="#ticks"/></svg></div>
      <div class="bubble"><span class="text">Bhiii</span><time>22:10</time><svg class="ticks"><use href="#ticks"/></svg></div>

      <div class="bubble first voice">
        <svg class="tail"><use href="#tail"/></svg>
        <div class="card">
          <span class="disc"><svg><use href="#call-out"/></svg></span>
          <div class="info"><strong>Voice call</strong><span>No answer</span></div>
          <time>22:10</time>
        </div>
      </div>
      <div class="bubble first voice">
        <svg class="tail"><use href="#tail"/></svg>
        <div class="card">
          <span class="disc"><svg><use href="#call-out"/></svg></span>
          <div class="info"><strong>Voice call</strong><span>No answer</span></div>
          <time>22:11</time>
        </div>
      </div>

      <div class="bubble first"><svg class="tail"><use href="#tail"/></svg><span class="text">Bhai</span><time>22:11</time><svg class="ticks"><use href="#ticks"/></svg></div>
      <div class="bubble"><span class="text">Refund kardo na</span><time>22:11</time><svg class="ticks"><use href="#ticks"/></svg></div>
    </section>

    <form class="composer">
      <button type="button" class="to-bottom" aria-label="Scroll to bottom"><svg viewBox="0 0 36 40"><path d="M3 4l15 15L33 4M3 21l15 15 15-15" fill="none" stroke="#8d9598" stroke-width="5" stroke-linecap="round" stroke-linejoin="round"/></svg></button>
      <div class="field">
        <button type="button" aria-label="Stickers"><svg class="ico" viewBox="0 0 60 60"><path d="M20 3h20q17 0 17 17v12q0 4-3 7L39 54q-3 3-7 3H20Q3 57 3 40V20Q3 3 20 3zM33 56V44q0-10 10-10h13" fill="none" stroke="#8d9598" stroke-width="6"/><circle cx="19" cy="20" r="5" fill="#8d9598"/><circle cx="40" cy="20" r="5" fill="#8d9598"/><path d="M16 34h24q-8 5-8 10-12 1-16-10z" fill="#8d9598"/></svg></button>
        <input type="text" placeholder="Message" aria-label="Message">
        <button type="button" aria-label="Attach"><svg class="ico" viewBox="0 0 60 60"><path d="M46 13v28q0 16-16 16T14 41V15Q14 3 25 3t11 12v25q0 7-6 7t-6-7V13" fill="none" stroke="#8d9598" stroke-width="5" stroke-linecap="round"/></svg></button>
        <button type="button" aria-label="Pay"><svg class="ico" viewBox="0 0 60 60"><circle cx="30" cy="30" r="27" fill="none" stroke="#8d9598" stroke-width="6"/><path d="M20 19h21M20 26h21M20 19h7q7 0 7 7t-7 7h-5l11 12" fill="none" stroke="#8d9598" stroke-width="4"/></svg></button>
        <button type="button" aria-label="Camera"><svg class="ico" viewBox="0 0 60 60"><path d="M6 12h12l6-6h12l6 6h12q3 0 3 3v36q0 3-3 3H6q-3 0-3-3V15q0-3 3-3z" fill="none" stroke="#8d9598" stroke-width="6" stroke-linejoin="round"/><circle cx="30" cy="33" r="11" fill="none" stroke="#8d9598" stroke-width="5"/></svg></button>
      </div>
      <button type="button" class="mic" aria-label="Record voice message"><svg viewBox="0 0 42 58"><rect x="12" width="18" height="36" rx="9" fill="#0b1014"/><path d="M3 30q2 17 18 17t18-17M21 47v9" fill="none" stroke="#0b1014" stroke-width="5" stroke-linecap="round"/></svg></button>
    </form>
  </main>

  <nav class="system-nav">
    <button aria-label="Recents"><svg viewBox="0 0 48 48"><rect x="3" y="3" width="42" height="42" rx="6"/></svg></button>
    <button aria-label="Home"><svg viewBox="0 0 48 48"><circle cx="24" cy="24" r="21"/></svg></button>
    <button aria-label="Back"><svg viewBox="0 0 48 48"><path d="M43 3v42L5 24z"/></svg></button>
  </nav>

</body>
</html>
```
FILE: styles.css
```css
* {
  box-sizing: border-box;
}

body {
  margin: 0;
  height: 100vh;
  display: flex;
  flex-direction: column;
  overflow: hidden;
  background: #0b1014;
  color: #f7f8fa;
  font-family: Roboto, "Noto Sans", sans-serif;
}

h1, p {
  margin: 0;
  font-weight: 400;
}

button {
  display: block;
  padding: 0;
  border: 0;
  background: none;
  flex: none;
}

svg {
  display: block;
  flex: none;
}

.sprite {
  position: absolute;
  width: 0;
  height: 0;
}

.ico {
  width: 60px;
  height: 60px;
}

/* top */
.top {
  border-bottom: 2px solid #161b1f;
}

.status {
  display: flex;
  align-items: center;
  height: 112px;
  padding: 26px 90px 0 155px;
  color: #fff;
  font-size: 39px;
  font-weight: 500;
}

.clock,
.charge {
  padding-top: 2px;
}

.wa {
  width: 42px;
  height: 42px;
  margin-left: 25px;
}

.cast {
  width: 46px;
  height: 46px;
  margin-left: 20px;
}

.uber {
  margin-left: 15px;
  font-size: 23px;
  font-weight: 400;
}

.vibrate {
  width: 40px;
  height: 38px;
  margin-left: auto;
}

.wifi {
  width: 46px;
  height: 38px;
  margin-left: 20px;
}

.volte {
  width: 38px;
  height: 38px;
  margin-left: 28px;
}

.volte text {
  fill: #0b1014;
  font-weight: 900;
}

.signal {
  width: 41px;
  height: 41px;
  margin-left: 18px;
}

.charge {
  margin-left: 20px;
}

.battery {
  width: 27px;
  height: 41px;
  margin-left: 8px;
}

.app-bar {
  display: flex;
  align-items: center;
  height: 163px;
  padding: 0 54px 0 36px;
}

.back svg {
  width: 72px;
  height: 72px;
}

.avatar {
  position: relative;
  width: 104px;
  height: 104px;
  margin-left: 50px;
}

.logo-top,
.logo-bottom {
  fill: #05090f;
  stroke: #b8c4cc;
  stroke-width: 1;
  font-size: 15px;
  font-weight: 700;
  text-anchor: middle;
}

.logo-bottom {
  stroke: #56b4e4;
}

.avatar .badge {
  position: absolute;
  right: -25px;
  bottom: -19px;
  width: 58px;
  height: 58px;
}

.who {
  flex: 1;
  min-width: 0;
  margin-left: 38px;
}

.who h1 {
  font-size: 50px;
  line-height: 60px;
  white-space: nowrap;
}

.who p {
  margin-top: 4px;
  font-size: 37px;
  line-height: 46px;
}

.call {
  margin-left: 54px;
}

.caret {
  margin-left: 33px;
}

.caret svg {
  width: 24px;
  height: 16px;
}

.more {
  margin-left: 57px;
}

.more svg {
  width: 24px;
  height: 48px;
  fill: #f7f8fa;
}

/* chat */
.chat {
  position: relative;
  flex: 1;
  min-height: 0;
  display: flex;
  flex-direction: column;
  background: #0a0f13;
}

.wallpaper {
  position: absolute;
  inset: 0;
  width: 100%;
  height: 100%;
  fill: none;
  stroke: #22272a;
  stroke-width: 2.5;
  stroke-linecap: round;
  stroke-linejoin: round;
}

.wallpaper path {
  vector-effect: non-scaling-stroke;
}

.wallpaper .solid {
  fill: #22272a;
  stroke: none;
}

.wallpaper .scribble {
  fill: #22272a;
  stroke: none;
  font-size: 26px;
}

/* dots are round caps, a thick one with a smaller one on top */
.hole { stroke: #0a0f13; }
.ring.s { stroke-width: 14px; }
.hole.s { stroke-width: 9px; }
.ring.m { stroke-width: 22px; }
.hole.m { stroke-width: 17px; }
.ring.l { stroke-width: 28px; }
.hole.l { stroke-width: 23px; }

.messages {
  position: relative;
  flex: 1;
  min-height: 0;
  overflow: hidden;
  display: flex;
  flex-direction: column;
  align-items: flex-end;
  padding: 30px 51px 0;
}

.day {
  align-self: center;
  flex: none;
  padding: 21px 28px 15px;
  border-radius: 22px;
  background: #13181b;
  color: #8d9598;
  font-size: 37px;
  font-weight: 500;
  line-height: 43px;
}

.notice {
  align-self: center;
  flex: none;
  width: 100%;
  max-width: 846px;
  margin-top: 38px;
  padding: 21px 28px 16px;
  border-radius: 24px;
  background: #13181b;
  color: #8d9598;
  font-size: 39px;
  line-height: 46px;
  text-align: center;
}

.notice a {
  color: inherit;
  font-weight: 700;
  text-decoration: none;
}

.encrypted {
  margin-top: 34px;
  color: #ffd279;
}

.lock,
.timer {
  display: inline-block;
}

.lock {
  width: 22px;
  height: 26px;
  margin-right: 4px;
}

.timer {
  width: 34px;
  height: 34px;
  margin-right: 2px;
  vertical-align: -4px;
}

.bubble {
  position: relative;
  flex: none;
  display: flex;
  min-height: 98px;
  margin-top: 8px;
  padding: 19px 27px 10px 29px;
  border-radius: 34px;
  background: #144d37;
}

.bubble.first {
  margin-top: 30px;
  border-top-right-radius: 0;
}

.notice + .bubble.first {
  margin-top: 39px;
}

.tail {
  position: absolute;
  top: 0;
  right: -21px;
  width: 22px;
  height: 30px;
  color: #144d37;
}

.text {
  font-size: 48px;
  line-height: 56px;
}

.bubble time {
  align-self: flex-end;
  margin-left: 24px;
  color: #a0b7ad;
  font-size: 36px;
  line-height: 42px;
}

.ticks {
  align-self: flex-end;
  width: 48px;
  height: 30px;
  margin: 0 0 9px 12px;
  color: #a0b7ad;
}

.bubble.voice {
  padding: 12px;
}

.card {
  display: flex;
  align-items: center;
  padding: 26px 24px;
  border-radius: 24px;
  background: #144231;
}

.disc {
  display: grid;
  place-items: center;
  width: 120px;
  height: 120px;
  border-radius: 50%;
  background: #2c5747;
  color: #8d9598;
}

.disc svg {
  width: 46px;
  height: 46px;
}

.info {
  display: flex;
  flex-direction: column;
  margin-left: 24px;
  padding-bottom: 14px;
  color: #a0b7ad;
  font-size: 42px;
  line-height: 57px;
}

.info strong {
  color: #f7f8fa;
  font-weight: 700;
}

.card time {
  margin-left: 35px;
}

/* composer */
.composer {
  position: relative;
  flex: none;
  display: flex;
  align-items: flex-end;
  gap: 15px;
  padding: 7px 16px 14px 14px;
}

.field {
  flex: 1;
  min-width: 0;
  display: flex;
  align-items: center;
  gap: 84px;
  height: 141px;
  padding: 0 39px 0 40px;
  border-radius: 71px;
  background: #20272a;
}

.field input {
  flex: 1;
  min-width: 0;
  margin-left: -43px;
  padding: 2px 0 0;
  border: 0;
  outline: 0;
  background: none;
  color: #f7f8fa;
  font: 54px Roboto, "Noto Sans", sans-serif;
}

.field input::placeholder {
  color: #8d9598;
  opacity: 1;
}

.mic {
  display: grid;
  place-items: center;
  width: 144px;
  height: 144px;
  margin-bottom: 2px;
  border-radius: 50%;
  background: #22c063;
}

.mic svg {
  width: 42px;
  height: 58px;
}

.to-bottom {
  position: absolute;
  right: 36px;
  top: -144px;
  display: grid;
  place-items: center;
  width: 96px;
  height: 96px;
  border-radius: 50%;
  background: #27313a;
  box-shadow: 0 3px 6px rgba(0, 0, 0, .3);
}

.to-bottom svg {
  width: 36px;
  height: 40px;
}

/* android buttons */
.system-nav {
  flex: none;
  display: flex;
  justify-content: center;
  gap: 210px;
  height: 132px;
  padding-right: 18px;
  background: #000;
}

.system-nav svg {
  width: 48px;
  height: 48px;
  fill: none;
  stroke: #999;
  stroke-width: 6;
  stroke-linejoin: round;
}
```
